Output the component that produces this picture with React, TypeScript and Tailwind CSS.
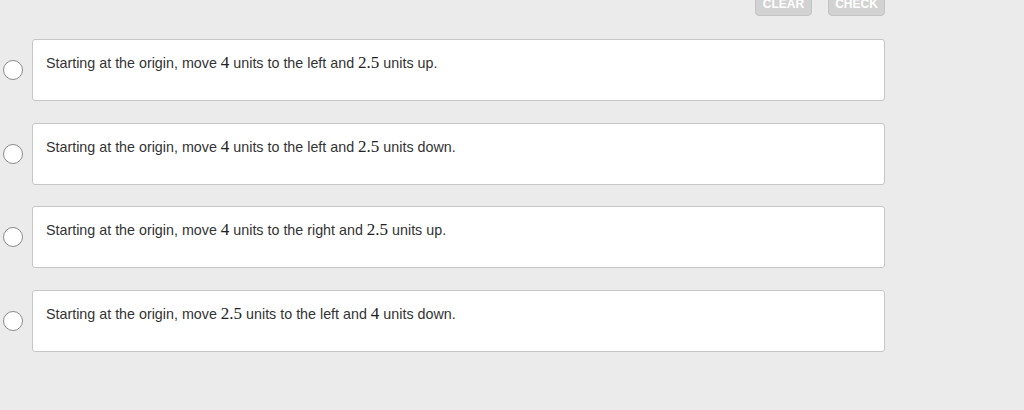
import React from "react";

type Part = string | { m: string };

const choices: Part[][] = [
  ["Starting at the origin, move ", { m: "4" }, " units to the left and ", { m: "2.5" }, " units up."],
  ["Starting at the origin, move ", { m: "4" }, " units to the left and ", { m: "2.5" }, " units down."],
  ["Starting at the origin, move ", { m: "4" }, " units to the right and ", { m: "2.5" }, " units up."],
  ["Starting at the origin, move ", { m: "2.5" }, " units to the left and ", { m: "4" }, " units down."],
];

function Choice({ parts }: { parts: Part[] }) {
  return (
    <div className="flex items-center">
      <div className="ml-[3px] w-[20px] h-[20px] rounded-full border border-[#8a8a8a] bg-white" />
      <div className="ml-[9px] w-[853px] h-[62px] bg-white border border-[#c6c6c6] rounded-[3px] pl-[13px] pt-[13px]">
        <p className="text-[14.3px] leading-[20px] text-[#333]">
          {parts.map((p, i) =>
            typeof p === "string" ? (
              <span key={i}>{p}</span>
            ) : (
              <span
                key={i}
                className="text-[17px] leading-none text-[#222]"
                style={{ fontFamily: '"Liberation Serif", "DejaVu Serif", serif' }}
              >
                {p.m}
              </span>
            )
          )}
        </p>
      </div>
    </div>
  );
}

export default function App() {
  return (
    <div
      className="w-[1024px] h-[410px] overflow-hidden bg-[#ebebeb]"
      style={{ fontFamily: '"Liberation Sans", Arial, sans-serif' }}
    >
      <div className="w-[885px] flex justify-end gap-[16px] -mt-[12px]">
        <button className="w-[57px] h-[28px] rounded-[4px] bg-[#d2d2d2] border border-[#c4c4c4] text-white font-bold text-[12px] pt-[4px]">
          CLEAR
        </button>
        <button className="w-[57px] h-[28px] rounded-[4px] bg-[#d2d2d2] border border-[#c4c4c4] text-white font-bold text-[12px] pt-[4px]">
          CHECK
        </button>
      </div>
      <div className="mt-[23px] flex flex-col gap-[21.7px]">
        {choices.map((c, i) => (
          <Choice key={i} parts={c} />
        ))}
      </div>
    </div>
  );
}
